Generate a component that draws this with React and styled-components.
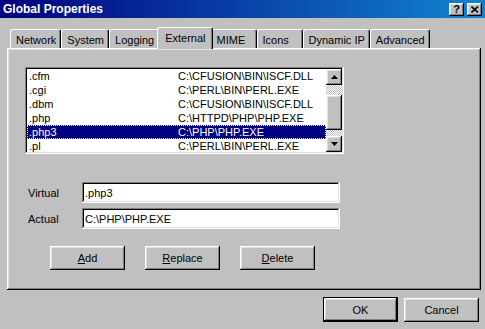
import styled, { createGlobalStyle } from "styled-components";

const GlobalStyle = createGlobalStyle`
  html, body {
    margin: 0;
    padding: 0;
    background: #c0c0c0;
  }
  body {
    font-family: "Liberation Sans", Arial, sans-serif;
    font-size: 11px;
    color: #000;
  }
`;

const raised = `
  box-shadow: inset -1px -1px #000, inset 1px 1px #fff,
    inset -2px -2px #808080, inset 2px 2px #dfdfdf;
`;
const sunken = `
  box-shadow: inset -1px -1px #fff, inset 1px 1px #808080,
    inset -2px -2px #dfdfdf, inset 2px 2px #000;
`;

const Window = styled.div`
  width: 485px;
  height: 329px;
  background: #c0c0c0;
  overflow: hidden;
`;
const TitleBar = styled.div`
  height: 18px;
  display: flex;
  align-items: center;
  justify-content: space-between;
  padding: 0 3px;
  background: linear-gradient(90deg, #000080, #1084d0);
`;
const Title = styled.span`
  color: #fff;
  font-weight: bold;
  font-size: 12px;
`;
const TitleButtons = styled.div`
  display: flex;
  gap: 3px;
`;
const TitleButton = styled.div`
  width: 15px;
  height: 13px;
  background: #c0c0c0;
  ${raised}
  display: flex;
  align-items: center;
  justify-content: center;
  font-weight: bold;
  font-size: 11px;
  line-height: 13px;
`;
const Body = styled.div`
  padding: 9px 0 0 7px;
`;
const TabRow = styled.div`
  display: flex;
  align-items: flex-end;
  height: 21px;
  padding-left: 3px;
  position: relative;
  z-index: 1;
`;
const Tab = styled.div`
  box-sizing: border-box;
  min-width: ${(p) => (p.$active ? 50 : 46)}px;
  height: ${(p) => (p.$active ? 22 : 19)}px;
  margin: ${(p) => (p.$active ? "0 -2px -1px" : "0")};
  padding: 2px ${(p) => (p.$active ? 6 : 4)}px 0 ${(p) => (p.$active ? 7 : 5)}px;
  line-height: 17px;
  background: #c0c0c0;
  border-left: 1px solid #fff;
  border-top: 1px solid #fff;
  border-right: 1px solid #000;
  border-radius: 3px 3px 0 0;
  box-shadow: inset -1px 0 #808080;
  position: relative;
  z-index: ${(p) => (p.$active ? 2 : 0)};
  white-space: nowrap;
`;
const Panel = styled.div`
  box-sizing: border-box;
  width: 474px;
  height: 242px;
  ${raised}
  padding: 19px 0 0 18px;
  display: flex;
  flex-direction: column;
`;
const ListBox = styled.div`
  box-sizing: border-box;
  width: 319px;
  height: 87px;
  padding: 2px;
  background: #fff;
  ${sunken}
  display: flex;
`;
const Rows = styled.div`
  flex: 1;
  overflow: hidden;
`;
const Row = styled.div`
  display: grid;
  grid-template-columns: 149px 1fr;
  box-sizing: border-box;
  height: 14px;
  line-height: 14px;
  padding-left: 2px;
  white-space: nowrap;
  background: ${(p) => (p.$selected ? "#000080" : "transparent")};
  color: ${(p) => (p.$selected ? "#fff" : "#000")};
  outline: ${(p) => (p.$selected ? "1px dotted #ffff90" : "none")};
  outline-offset: -1px;
`;
const ScrollBar = styled.div`
  width: 16px;
  display: flex;
  flex-direction: column;
`;
const ScrollButton = styled.div`
  height: 16px;
  background: #c0c0c0;
  ${raised}
  display: flex;
  align-items: center;
  justify-content: center;
`;
const Track = styled.div`
  flex: 1;
  padding-top: 10px;
  background: repeating-conic-gradient(#c0c0c0 0 25%, #fff 0 50%) 0 0 / 2px 2px;
`;
const Thumb = styled.div`
  height: 35px;
  background: #c0c0c0;
  ${raised}
`;
const Fields = styled.div`
  margin: 28px 0 0 3px;
  display: grid;
  grid-template-columns: 54px 258px;
  row-gap: 5px;
  align-items: center;
`;
const Label = styled.span`
  line-height: 14px;
`;
const Field = styled.input`
  box-sizing: border-box;
  width: 258px;
  height: 21px;
  border: none;
  outline: none;
  padding: 1px 3px 0;
  background: #fff;
  ${sunken}
  font: 11px "Liberation Sans", Arial, sans-serif;
  color: #000;
`;
const ButtonRow = styled.div`
  display: flex;
  gap: 20px;
  margin: 17px 0 0 25px;
`;
const Button = styled.button`
  box-sizing: border-box;
  width: 75px;
  height: ${(p) => (p.$tall ? 25 : 24)}px;
  padding: 0;
  border: ${(p) => (p.$default ? "1px solid #000" : "none")};
  background: #c0c0c0;
  ${raised}
  font: 11px "Liberation Sans", Arial, sans-serif;
  color: #000;
`;
const Footer = styled.div`
  width: 472px;
  display: flex;
  justify-content: flex-end;
  align-items: center;
  gap: 6px;
  margin-top: 7px;
`;

const Arrow = ({ down }) => (
  <svg width="7" height="4" viewBox="0 0 7 4">
    <polygon points={down ? "0,0 7,0 3.5,4" : "3.5,0 7,4 0,4"} fill="#000" />
  </svg>
);

const tabs = ["Network", "System", "Logging", "External", "MIME", "Icons", "Dynamic IP", "Advanced"];

const mappings = [
  [".cfm", "C:\\CFUSION\\BIN\\ISCF.DLL"],
  [".cgi", "C:\\PERL\\BIN\\PERL.EXE"],
  [".dbm", "C:\\CFUSION\\BIN\\ISCF.DLL"],
  [".php", "C:\\HTTPD\\PHP\\PHP.EXE"],
  [".php3", "C:\\PHP\\PHP.EXE"],
  [".pl", "C:\\PERL\\BIN\\PERL.EXE"],
];

export default function App() {
  return (
    <>
      <GlobalStyle />
      <Window>
        <TitleBar>
          <Title>Global Properties</Title>
          <TitleButtons>
            <TitleButton>?</TitleButton>
            <TitleButton>
              <svg width="8" height="7" viewBox="0 0 8 7">
                <path d="M0.5 0.5 L7 6.5 M7 0.5 L0.5 6.5" stroke="#000" strokeWidth="1.6" />
              </svg>
            </TitleButton>
          </TitleButtons>
        </TitleBar>
        <Body>
          <TabRow>
            {tabs.map((t) => (
              <Tab key={t} $active={t === "External"}>
                {t}
              </Tab>
            ))}
          </TabRow>
          <Panel>
            <ListBox>
              <Rows>
                {mappings.map(([ext, path]) => (
                  <Row key={ext} $selected={ext === ".php3"}>
                    <span>{ext}</span>
                    <span>{path}</span>
                  </Row>
                ))}
              </Rows>
              <ScrollBar>
                <ScrollButton>
                  <Arrow />
                </ScrollButton>
                <Track>
                  <Thumb />
                </Track>
                <ScrollButton>
                  <Arrow down />
                </ScrollButton>
              </ScrollBar>
            </ListBox>
            <Fields>
              <Label>Virtual</Label>
              <Field readOnly defaultValue=".php3" />
              <Label>Actual</Label>
              <Field readOnly defaultValue="C:\PHP\PHP.EXE" />
            </Fields>
            <ButtonRow>
              <Button>
                <u>A</u>dd
              </Button>
              <Button>
                <u>R</u>eplace
              </Button>
              <Button>
                <u>D</u>elete
              </Button>
            </ButtonRow>
          </Panel>
          <Footer>
            <Button $default $tall>
              OK
            </Button>
            <Button>Cancel</Button>
          </Footer>
        </Body>
      </Window>
    </>
  );
}
